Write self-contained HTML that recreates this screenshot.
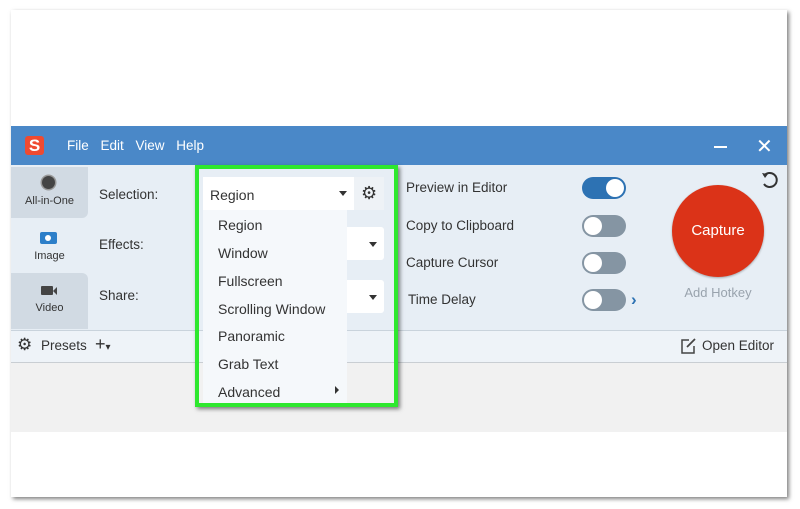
<!DOCTYPE html>
<html><head><style>
body{margin:0;width:800px;height:509px;background:#fff;font-family:"Liberation Sans",sans-serif;position:relative;overflow:hidden}
.a{position:absolute}
.frame{left:11px;top:10px;width:776px;height:487px;background:#fff;box-shadow:2px 2px 4px rgba(0,0,0,.5)}
.t{font-size:13.5px;color:#333}
.tog{width:44px;height:22px;border-radius:11px;background:#8595a3}
.tog::after{content:"";position:absolute;top:2px;left:2px;width:18px;height:18px;border-radius:50%;background:#fff}
.on{background:#2d72b3}.on::after{left:24px}
.mi{left:218px;font-size:14px;color:#333}
</style></head><body>
<div class="a frame"></div>
<div class="a" style="left:11px;top:126px;width:776px;height:39px;background:#4a88c8"></div>
<div class="a" style="left:25px;top:136px;width:19px;height:19px;background:#ef4a30;border-radius:3px;color:#fff;font-weight:bold;font-size:17px;text-align:center;line-height:19px">S</div>
<div class="a" style="left:67px;top:138px;color:#fff;font-size:13.5px;word-spacing:8px">File Edit View Help</div>
<div class="a" style="left:714px;top:146px;width:13px;height:1.5px;background:#fff"></div>
<div class="a" style="left:756px;top:134px;color:#fff;font-size:20px">✕</div>
<div class="a" style="left:11px;top:165px;width:776px;height:165px;background:#e7eef5"></div>
<div class="a" style="left:11px;top:330px;width:776px;height:1px;background:#c9d3dc"></div>
<div class="a" style="left:11px;top:331px;width:776px;height:31px;background:#eef3f8;border-bottom:1px solid #c9ced3"></div>
<div class="a" style="left:11px;top:363px;width:776px;height:69px;background:#f1f1f1"></div>
<div class="a" style="left:11px;top:167px;width:77px;height:51px;background:#d1dae3;border-radius:0 0 6px 0"></div>
<div class="a" style="left:11px;top:273px;width:77px;height:56px;background:#d1dae3;border-radius:0 6px 0 0"></div>
<div class="a" style="left:42px;top:176px;width:13px;height:13px;border-radius:50%;background:#444;box-shadow:0 0 0 1.5px #999"></div>
<div class="a" style="left:11px;top:195px;width:77px;text-align:center;font-size:11px;color:#333">All-in-One</div>
<div class="a" style="left:40px;top:232px;width:17px;height:12px;background:#2d7fc9;border-radius:2px"></div>
<div class="a" style="left:45px;top:235px;width:6px;height:6px;background:#fff;border-radius:50%"></div>
<div class="a" style="left:11px;top:250px;width:77px;text-align:center;font-size:11px;color:#333">Image</div>
<div class="a" style="left:41px;top:286px;width:12px;height:9px;background:#444;border-radius:1px"></div>
<div class="a" style="left:53px;top:287px;border:4px solid transparent;border-right:4px solid #444;border-left:0"></div>
<div class="a" style="left:11px;top:302px;width:77px;text-align:center;font-size:11px;color:#333">Video</div>
<div class="a t" style="left:99px;top:187px">Selection:</div>
<div class="a t" style="left:99px;top:237px">Effects:</div>
<div class="a t" style="left:99px;top:288px">Share:</div>
<div class="a" style="left:340px;top:227px;width:44px;height:33px;background:#fff;border-radius:3px"></div>
<div class="a" style="left:369px;top:242px;border:4px solid transparent;border-top:5px solid #333"></div>
<div class="a" style="left:340px;top:280px;width:44px;height:33px;background:#fff;border-radius:3px"></div>
<div class="a" style="left:369px;top:295px;border:4px solid transparent;border-top:5px solid #333"></div>
<div class="a" style="left:203px;top:177px;width:151px;height:33px;background:#fff"></div>
<div class="a" style="left:354px;top:177px;width:30px;height:33px;background:#eef2f6"></div>
<div class="a" style="left:361px;top:183px;font-size:18px;color:#333">⚙</div>
<div class="a" style="left:210px;top:187px;font-size:14px;color:#333">Region</div>
<div class="a" style="left:339px;top:191px;border:4px solid transparent;border-top:5px solid #333"></div>
<div class="a" style="left:203px;top:210px;width:144px;height:193px;background:#f5f8fb"></div>
<div class="a mi" style="top:217px">Region</div>
<div class="a mi" style="top:245px">Window</div>
<div class="a mi" style="top:273px">Fullscreen</div>
<div class="a mi" style="top:301px">Scrolling Window</div>
<div class="a mi" style="top:328px">Panoramic</div>
<div class="a mi" style="top:356px">Grab Text</div>
<div class="a mi" style="top:384px">Advanced</div>
<div class="a" style="left:335px;top:386px;border:4px solid transparent;border-left:4px solid #333;border-right:0"></div>
<div class="a" style="left:195px;top:165px;width:195px;height:234px;border:4px solid #2ee82e;box-shadow:2px 2px 4px rgba(0,0,0,.5)"></div>
<div class="a t" style="left:406px;top:180px">Preview in Editor</div>
<div class="a t" style="left:406px;top:218px">Copy to Clipboard</div>
<div class="a t" style="left:406px;top:255px">Capture Cursor</div>
<div class="a t" style="left:408px;top:292px">Time Delay</div>
<div class="a tog on" style="left:582px;top:177px"></div>
<div class="a tog" style="left:582px;top:215px"></div>
<div class="a tog" style="left:582px;top:252px"></div>
<div class="a tog" style="left:582px;top:289px"></div>
<div class="a" style="left:631px;top:290px;color:#2d72b3;font-size:17px;font-weight:bold">›</div>
<div class="a" style="left:672px;top:185px;width:92px;height:92px;border-radius:50%;background:#db3318;box-shadow:0 1px 2px rgba(0,0,0,.3);color:#fff;font-size:15px;text-align:center;line-height:92px">Capture</div>
<div class="a" style="left:672px;top:285px;width:92px;text-align:center;font-size:13px;color:#99a3ad">Add Hotkey</div>
<svg class="a" style="left:760px;top:170px" width="20" height="20" viewBox="0 0 20 20"><path d="M4 6 A7 7 0 1 1 4 14" fill="none" stroke="#333" stroke-width="2"/><path d="M2 3 L5 8 L8 4 Z" fill="#333"/></svg>
<div class="a" style="left:17px;top:335px;font-size:17px;color:#333">⚙</div>
<div class="a t" style="left:41px;top:338px">Presets</div>
<div class="a" style="left:95px;top:334px;font-size:18px;color:#333">+<span style="font-size:10px">▾</span></div>
<svg class="a" style="left:680px;top:337px" width="18" height="17" viewBox="0 0 18 17"><path d="M9 3H2V16H14V9" fill="none" stroke="#444" stroke-width="1.5"/><path d="M7 10L15 2" stroke="#444" stroke-width="1.8"/></svg>
<div class="a t" style="left:702px;top:338px">Open Editor</div>
</body></html>
